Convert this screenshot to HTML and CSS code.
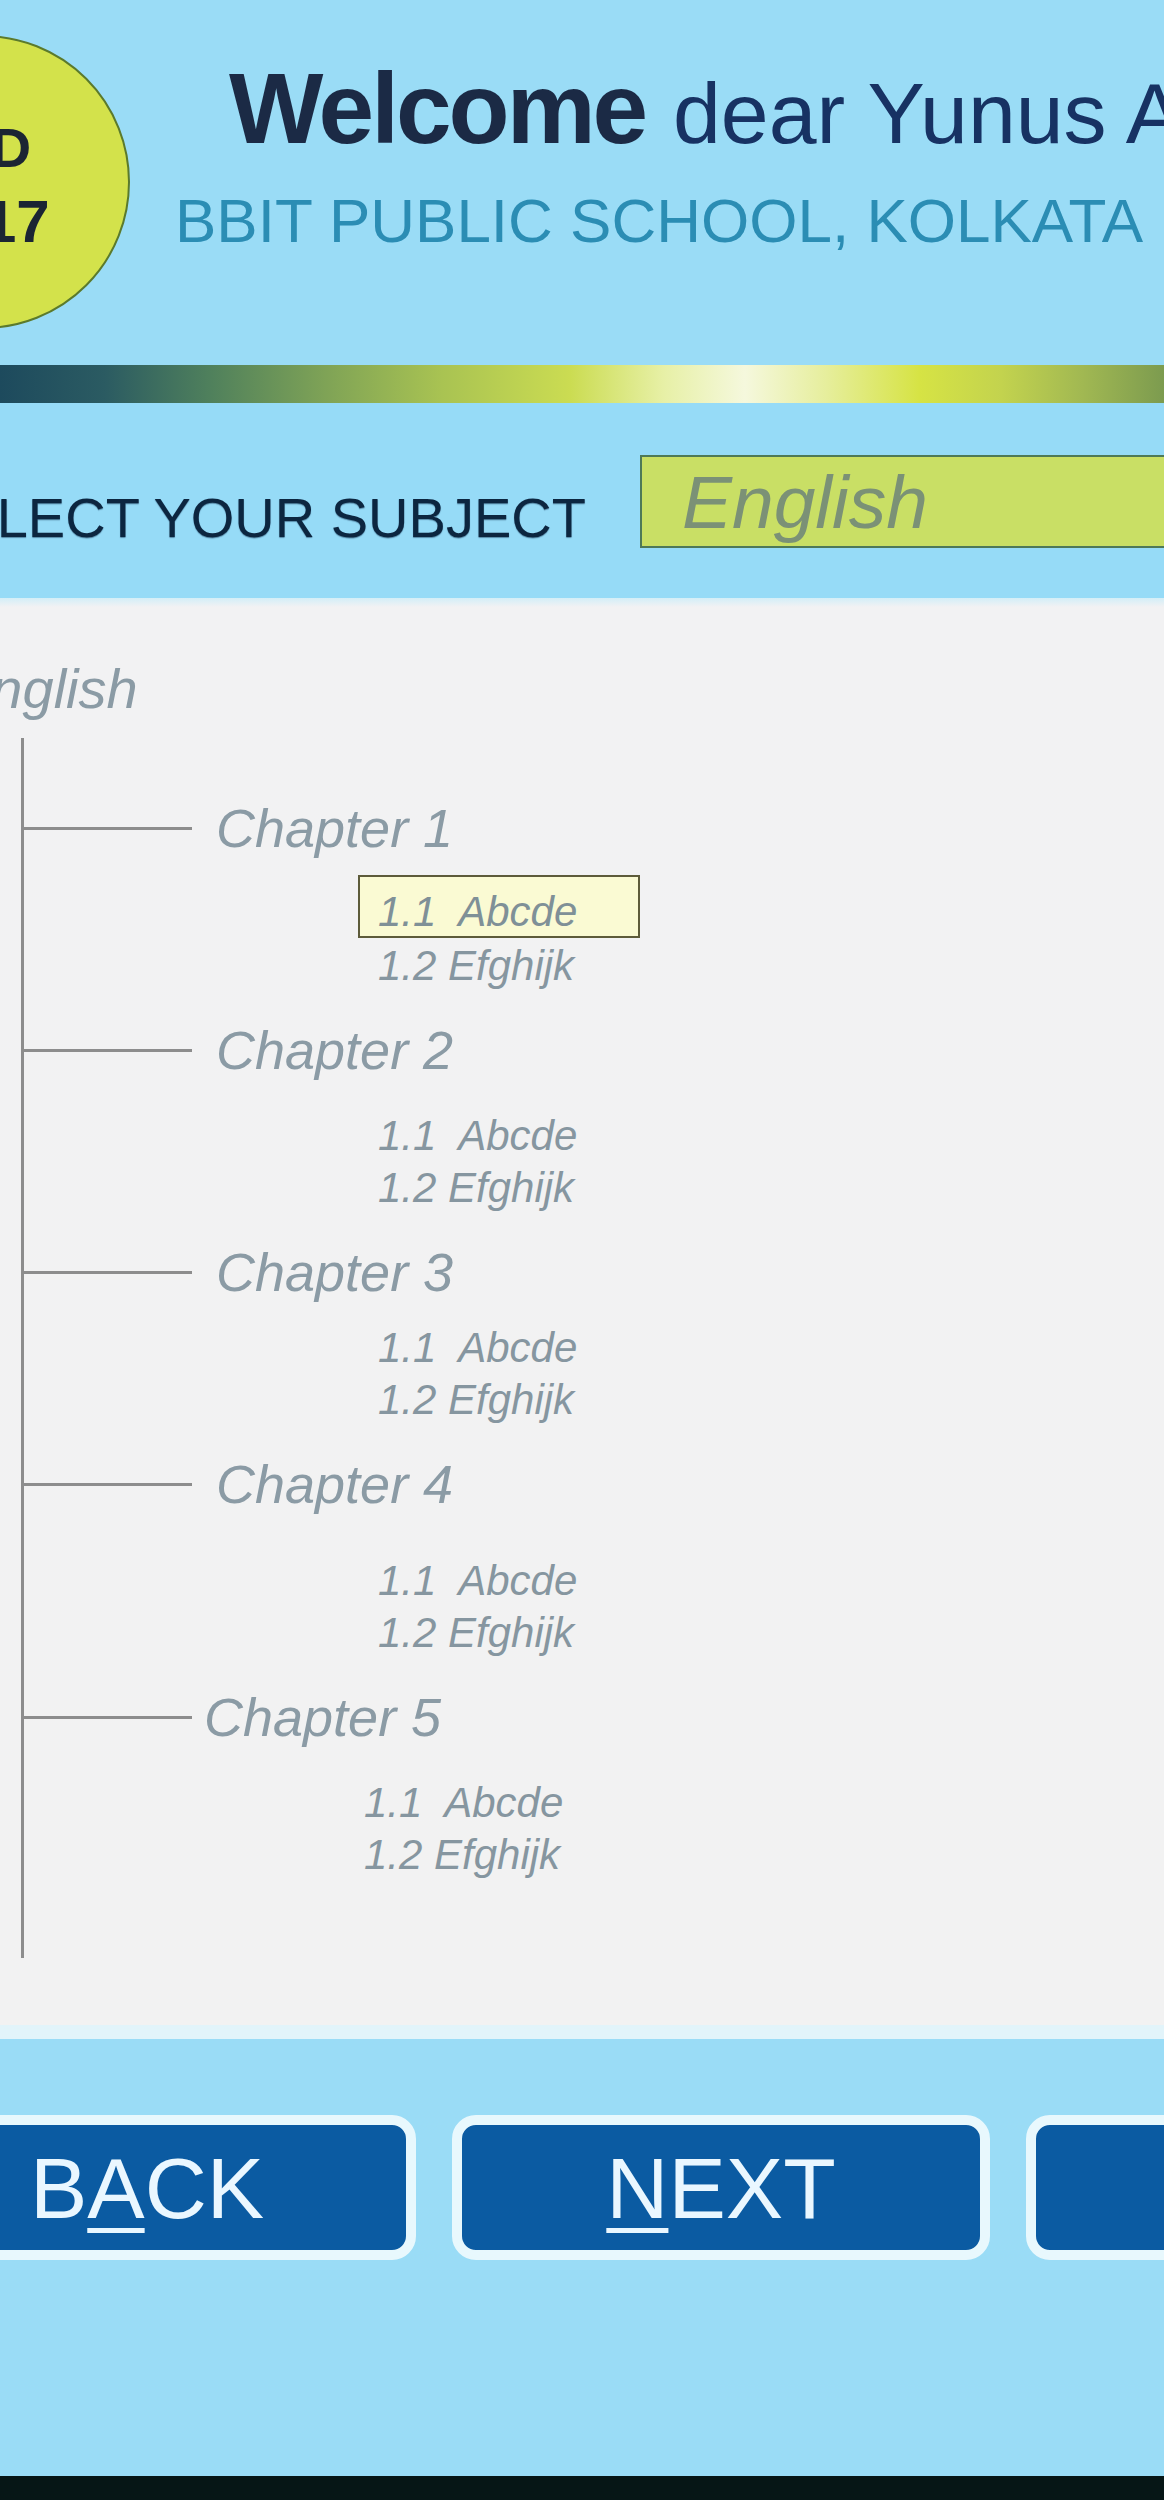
FILE: index.html
```html
<!DOCTYPE html>
<html lang="en">
<head>
<meta charset="utf-8">
<title>Select Subject</title>
<link rel="stylesheet" href="styles.css">
</head>
<body>
<div class="page">
  <header class="top">
    <div class="badge">
      <div class="badge-l1">UID</div>
      <div class="badge-l2">2017</div>
    </div>
    <div class="greet">
      <div class="welcome"><strong>Welcome</strong> <span class="dear">dear Yunus A</span></div>
      <div class="school">BBIT PUBLIC SCHOOL, KOLKATA</div>
    </div>
  </header>
  <div class="rule"></div>

  <section class="subject-row">
    <div class="subject-label">SELECT YOUR SUBJECT</div>
    <div class="subject-select">English</div>
  </section>

  <main class="panel">
    <div class="root">English</div>
    <div class="tree">
      <div class="chapter ch-1">
        <div class="ch-row"><span class="connector"></span><span class="ch-title">Chapter 1</span></div>
        <div class="subs">
          <div class="sub active">1.1&nbsp; Abcde</div>
          <div class="sub">1.2 Efghijk</div>
        </div>
      </div>
      <div class="chapter ch-2">
        <div class="ch-row"><span class="connector"></span><span class="ch-title">Chapter 2</span></div>
        <div class="subs">
          <div class="sub">1.1&nbsp; Abcde</div>
          <div class="sub">1.2 Efghijk</div>
        </div>
      </div>
      <div class="chapter ch-3">
        <div class="ch-row"><span class="connector"></span><span class="ch-title">Chapter 3</span></div>
        <div class="subs">
          <div class="sub">1.1&nbsp; Abcde</div>
          <div class="sub">1.2 Efghijk</div>
        </div>
      </div>
      <div class="chapter ch-4">
        <div class="ch-row"><span class="connector"></span><span class="ch-title">Chapter 4</span></div>
        <div class="subs">
          <div class="sub">1.1&nbsp; Abcde</div>
          <div class="sub">1.2 Efghijk</div>
        </div>
      </div>
      <div class="chapter ch-5">
        <div class="ch-row"><span class="connector"></span><span class="ch-title">Chapter 5</span></div>
        <div class="subs">
          <div class="sub">1.1&nbsp; Abcde</div>
          <div class="sub">1.2 Efghijk</div>
        </div>
      </div>
    </div>
  </main>

  <footer class="footer">
    <div class="buttons">
      <div class="btn">B<u>A</u>CK</div>
      <div class="btn"><u>N</u>EXT</div>
      <div class="btn"></div>
    </div>
  </footer>
  <div class="bottom-bar"></div>
</div>
</body>
</html>
```

FILE: styles.css
```css
* { box-sizing: border-box; }
html, body { margin: 0; padding: 0; }
body {
  background: #9adcf6;
  font-family: "Liberation Sans", Arial, Helvetica, sans-serif;
}
.page {
  width: 1164px;
  overflow: hidden;
}

/* ---------- header ---------- */
.top {
  height: 365px;
  display: flex;
  align-items: flex-start;
  padding-top: 35px;
  background: #9adcf6;
  white-space: nowrap;
}
.badge {
  flex-shrink: 0;
  width: 294px;
  height: 294px;
  margin-left: -164px;
  border: 2px solid #5b7a2c;
  border-radius: 50%;
  background: #d3e24b;
  color: #1b2533;
  font-weight: bold;
  text-align: center;
  padding-top: 79px;
}
.badge-l1 { font-size: 56px; line-height: 64px; }
.badge-l2 { font-size: 60px; line-height: 64px; margin-top: 10px; }

.greet {
  margin-left: 99px;
  margin-top: 23px;
}
.welcome {
  font-size: 100px;
  line-height: 1;
  color: #1a2a47;
}
.welcome strong { font-weight: bold; color: #1b2a45; letter-spacing: -3px; }
.dear { font-size: 86px; color: #173263; }
.school {
  margin-top: 32px;
  margin-left: -54px;
  font-size: 62px;
  line-height: 1;
  color: #2b8db4;
}

.rule {
  height: 38px;
  background: linear-gradient(90deg,
    #1d4a5d 0%, #2b5b62 9%, #4f805c 18%, #7fa356 28%, #a9c352 38%,
    #cbdc52 49%, #e7f0a6 57%, #f5f8dd 64%, #e6ee9c 71%, #d6e344 79%,
    #c3d34e 86%, #a1b852 93%, #7c9b4f 100%);
}

/* ---------- subject row ---------- */
.subject-row {
  height: 195px;
  display: flex;
  align-items: flex-start;
  padding-top: 52px;
  background: #96dbf7;
  white-space: nowrap;
}
.subject-label {
  margin-left: -78px;
  margin-top: 35px;
  font-size: 56px;
  line-height: 1;
  color: #0c2640;
  text-shadow: 0 1px 1px rgba(10, 40, 70, 0.45);
}
.subject-select {
  flex-shrink: 0;
  margin-left: 54px;
  width: 620px;
  height: 93px;
  border: 2px solid #4e7957;
  background: #c9df65;
  padding: 8px 0 0 40px;
  font-size: 75px;
  line-height: 1;
  font-style: italic;
  color: #7b9176;
}

/* ---------- tree panel ---------- */
.panel {
  height: 1427px;
  padding-top: 63px;
  background: linear-gradient(#d3eef8 0px, #f2f2f3 9px, #f2f2f2 100%);
  font-style: italic;
  color: #8b9ba5;
  white-space: nowrap;
}
.root {
  margin-left: -46px;
  font-size: 56px;
  line-height: 1;
}
.tree {
  margin-left: 21px;
  margin-top: 21px;
  border-left: 3px solid #8d8d8d;
  padding-top: 63px;
  padding-bottom: 77px;
}
.chapter + .chapter { margin-top: 31px; }
.ch-row {
  display: flex;
  align-items: center;
  height: 54px;
}
.connector {
  width: 168px;
  height: 3px;
  background: #8d8d8d;
}
.ch-title {
  margin-left: 24px;
  font-size: 54px;
  line-height: 1;
}
.subs {
  margin-top: 33px;
  margin-left: 354px;
}
.sub {
  font-size: 42px;
  line-height: 52px;
  color: #8696a0;
}
.sub.active {
  width: 282px;
  line-height: 48px;
  margin: -13px 0 2px -20px;
  padding: 11px 0 0 18px;
  border: 2px solid #5d5b3a;
  background: #fafad3;
  color: #7f9097;
}
.ch-3 .subs { margin-top: 23px; }
.ch-4 .subs { margin-top: 44px; }
.ch-5 .ch-title { margin-left: 12px; }
.ch-5 .subs { margin-left: 340px; }

/* ---------- footer ---------- */
.footer {
  height: 451px;
  border-top: 14px solid #e2f4fa;
  padding-top: 76px;
  background: #9adcf6;
}
.buttons {
  display: flex;
  gap: 36px;
  margin-left: -122px;
}
.btn {
  flex-shrink: 0;
  width: 538px;
  height: 145px;
  border: 10px solid #e8f8fd;
  border-radius: 24px;
  background: #0b5ba2;
  color: #eaf7ff;
  font-size: 86px;
  line-height: 1;
  display: flex;
  align-items: center;
  justify-content: center;
}
.btn u {
  text-decoration: underline;
  text-decoration-thickness: 5px;
  text-underline-offset: 10px;
}
.bottom-bar {
  height: 24px;
  background: #061616;
}
```
